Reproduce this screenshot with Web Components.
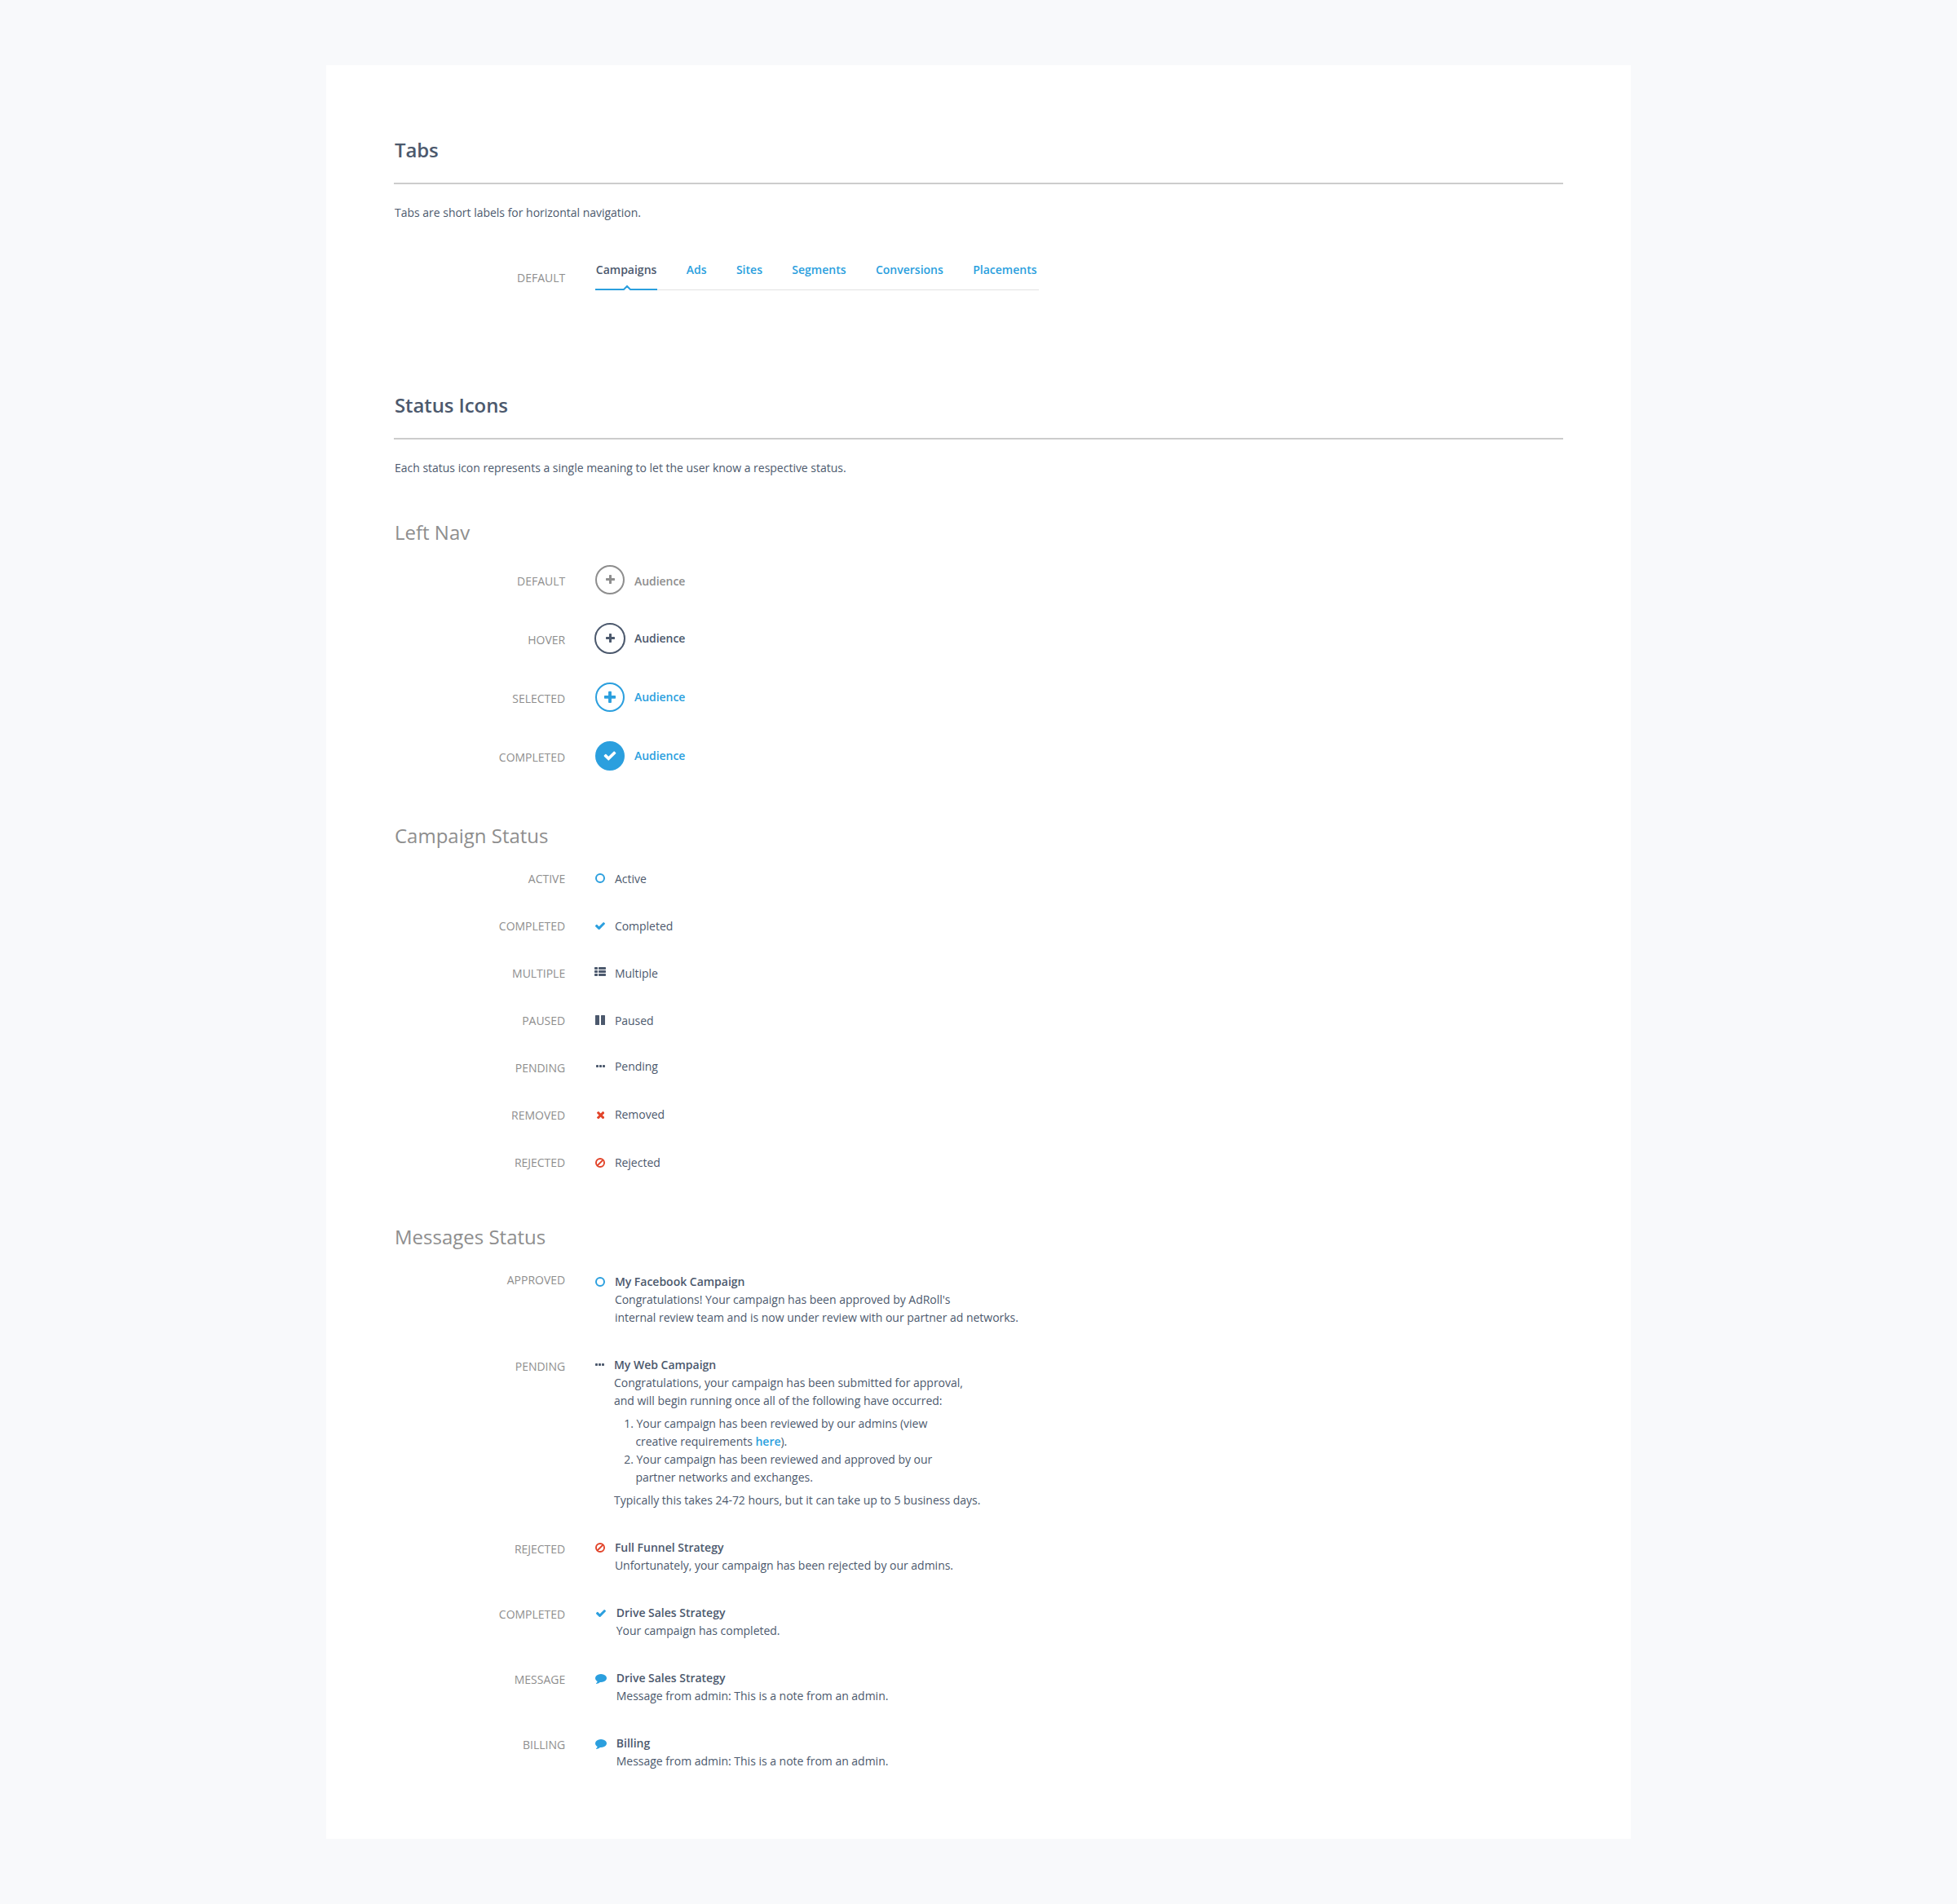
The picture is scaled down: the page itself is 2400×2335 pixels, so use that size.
<!DOCTYPE html>
<html lang="en">
<head>
<meta charset="utf-8">
<title>Tabs and Status Icons</title>
<style>
  html, body { margin: 0; }
  body {
    --ink: #4c596d; --muted: #8e8e8e; --blue: #2b9fde; --red: #e2442a;
    background: #f8f9fb; color: var(--ink);
    font: 14px/22px "Open Sans", sans-serif;
    letter-spacing: -.015px;
    min-height: 2335px; display: flex; justify-content: center; align-items: flex-start;
  }
</style>
</head>
<body>
<ui-sheet>
  <ui-section heading="Tabs" style="height:313px">
    <span slot="intro">Tabs are short labels for horizontal navigation.</span>
    <ui-row label="DEFAULT" style="--row-h:60px;--label-top:14px;margin-top:44px">
      <ui-tabs><ui-tab active>Campaigns</ui-tab><ui-tab>Ads</ui-tab><ui-tab>Sites</ui-tab><ui-tab>Segments</ui-tab><ui-tab>Conversions</ui-tab><ui-tab>Placements</ui-tab></ui-tabs>
    </ui-row>
  </ui-section>

  <ui-section heading="Status Icons">
    <span slot="intro">Each status icon represents a single meaning to let the user know a respective status.</span>

    <ui-group heading="Left Nav" style="margin-top:51px;height:372px">
      <ui-row label="DEFAULT" style="--row-h:72px"><ui-nav-item kind="default" style="--text-top:11px">Audience</ui-nav-item></ui-row>
      <ui-row label="HOVER" style="--row-h:72px"><ui-nav-item kind="hover">Audience</ui-nav-item></ui-row>
      <ui-row label="SELECTED" style="--row-h:72px"><ui-nav-item kind="selected">Audience</ui-nav-item></ui-row>
      <ui-row label="COMPLETED" style="--row-h:72px"><ui-nav-item kind="completed">Audience</ui-nav-item></ui-row>
    </ui-group>

    <ui-group heading="Campaign Status" style="height:492px;--head-gap:15px">
      <ui-row label="ACTIVE"><ui-status icon="ring" style="--icon-top:15px">Active</ui-status></ui-row>
      <ui-row label="COMPLETED"><ui-status icon="check" style="--icon-top:17px">Completed</ui-status></ui-row>
      <ui-row label="MULTIPLE"><ui-status icon="list" style="--icon-top:14px;--icon-left:-1px">Multiple</ui-status></ui-row>
      <ui-row label="PAUSED"><ui-status icon="pause" style="--icon-top:15px">Paused</ui-status></ui-row>
      <ui-row label="PENDING"><ui-status icon="dots" style="--icon-top:18px;--icon-left:1px;--text-top:9px">Pending</ui-status></ui-row>
      <ui-row label="REMOVED"><ui-status icon="times" style="--icon-top:17px;--icon-left:2px;--text-top:10px">Removed</ui-status></ui-row>
      <ui-row label="REJECTED"><ui-status icon="ban" style="--icon-top:16px">Rejected</ui-status></ui-row>
    </ui-group>

    <ui-group heading="Messages Status" style="--head-gap:15px">
      <ui-row label="APPROVED" style="--row-h:104px"><ui-status icon="ring" style="--icon-top:18px;--text-top:13px">
        <b>My Facebook Campaign</b><br>Congratulations! Your campaign has been approved by AdRoll's<br>internal review team and is now under review with our partner ad networks.
      </ui-status></ui-row>
      <ui-row label="PENDING" style="--row-h:224px;--label-top:13px"><ui-status icon="dots" style="--icon-top:20px;--text-top:11px;--text-left:23px">
        <b>My Web Campaign</b><br>Congratulations, your campaign has been submitted for approval,<br>and will begin running once all of the following have occurred:
        <ui-steps>
          <ui-step n="1.">Your campaign has been reviewed by our admins (view<br>creative requirements <ui-link>here</ui-link>).</ui-step>
          <ui-step n="2.">Your campaign has been reviewed and approved by our<br>partner networks and exchanges.</ui-step>
        </ui-steps>
        Typically this takes 24-72 hours, but it can take up to 5 business days.
      </ui-status></ui-row>
      <ui-row label="REJECTED" style="--row-h:80px;--label-top:13px"><ui-status icon="ban" style="--icon-top:16px;--text-top:11px">
        <b>Full Funnel Strategy</b><br>Unfortunately, your campaign has been rejected by our admins.
      </ui-status></ui-row>
      <ui-row label="COMPLETED" style="--row-h:80px;--label-top:13px"><ui-status icon="check" style="--icon-top:18px;--icon-left:1px;--text-top:11px;--text-left:25.800px">
        <b>Drive Sales Strategy</b><br>Your campaign has completed.
      </ui-status></ui-row>
      <ui-row label="MESSAGE" style="--row-h:80px;--label-top:13px"><ui-status icon="comment" style="--icon-top:17px;--text-top:11px;--text-left:25.800px">
        <b>Drive Sales Strategy</b><br>Message from admin: This is a note from an admin.
      </ui-status></ui-row>
      <ui-row label="BILLING" style="--row-h:80px;--label-top:13px"><ui-status icon="comment" style="--icon-top:17px;--text-top:11px;--text-left:25.800px">
        <b>Billing</b><br>Message from admin: This is a note from an admin.
      </ui-status></ui-row>
    </ui-group>
  </ui-section>
</ui-sheet>

<script>
const PLUS = '<path d="M1600 736v192q0 40-28 68t-68 28h-416v416q0 40-28 68t-68 28h-192q-40 0-68-28t-28-68v-416h-416q-40 0-68-28t-28-68v-192q0-40 28-68t68-28h416v-416q0-40 28-68t68-28h192q40 0 68 28t28 68v416h416q40 0 68 28t28 68z"/>';
const CHECK = '<path d="M1671 566q0 40-28 68l-724 724-136 136q-28 28-68 28t-68-28l-136-136-362-362q-28-28-28-68t28-68l136-136q28-28 68-28t68 28l294 295 656-657q28-28 68-28t68 28l136 136q28 28 28 68z"/>';
const TIMES = '<path d="M1490 1322q0 40-28 68l-136 136q-28 28-68 28t-68-28l-294-294-294 294q-28 28-68 28t-68-28l-136-136q-28-28-28-68t28-68l294-294-294-294q-28-28-28-68t28-68l136-136q28-28 68-28t68 28l294 294 294-294q28-28 68-28t68 28l136 136q28 28 28 68t-28 68l-294 294 294 294q28 28 28 68z"/>';
const COMMENT = '<path d="M1792 896q0 174-120 321.500t-326 233-450 85.500q-70 0-145-8-198 175-460 242-49 14-114 22-17 2-30.500-9t-17.500-29v-1q-3-4-.5-12t2-10 4.500-9.500l6-9 7-8.500 8-9q7-8 31-34.500t34.500-38 31-39.500 32.500-51 27-59 26-76q-157-89-247.500-220t-90.500-281q0-174 120-321.500t326-233 450-85.500 450 85.500 326 233 120 321.500z"/>';

/* name: [width, height, viewBox, colour, shapes] */
const ICONS = {
  ring: [12, 12, '0 0 12 12', 'blue', '<circle cx="6" cy="6" r="5" fill="none" stroke="currentColor" stroke-width="2"/>'],
  check: [12, 9.3, '121 334 1550 1188', 'blue', CHECK],
  list: [14, 11, '0 0 14 11', 'ink', [0, 4, 8].map(y => `<rect x="0" y="${y}" width="4" height="3" rx=".8"/><rect x="5" y="${y}" width="9" height="3" rx=".8"/>`).join('')],
  pause: [12, 12, '0 0 12 12', 'ink', '<rect width="5" height="12" rx=".5"/><rect x="7" width="5" height="12" rx=".5"/>'],
  dots: [11, 3, '0 0 11 3', 'ink', '<rect width="3" height="3" rx=".7"/><rect x="4" width="3" height="3" rx=".7"/><rect x="8" width="3" height="3" rx=".7"/>'],
  times: [9.3, 9.3, '302 366 1188 1188', 'red', TIMES],
  ban: [12, 12, '0 0 12 12', 'red', '<circle cx="6" cy="6" r="5.05" fill="none" stroke="currentColor" stroke-width="1.9"/><path d="M2.500 9.500 9.500 2.500" stroke="currentColor" stroke-width="1.800"/>'],
  comment: [14, 12, '0 256 1792 1536', 'blue', COMMENT]
};

const define = (name, render) => customElements.define(name, class extends HTMLElement {
  constructor() {
    super();
    this.attachShadow({ mode: 'open' });
  }
  connectedCallback() {
    this.shadowRoot.innerHTML = render(this);
  }
});

define('ui-sheet', () => `<style>
  :host { display: block; box-sizing: border-box; width: 1600px; height: 2175px; margin-top: 80px; padding: 87px 83px 0; background: #fff; }
</style><slot></slot>`);

define('ui-section', el => `<style>
  :host { display: block; }
  h1 { margin: 0; height: 57px; border-bottom: 2px solid #ccc; font-size: 24px; line-height: 33px; font-weight: 600; letter-spacing: -.1px; padding-left: 1px; }
  .intro { display: block; padding: 24px 0 0 1px; }
</style><h1>${el.getAttribute('heading')}</h1><div class="intro"><slot name="intro"></slot></div><slot></slot>`);

define('ui-group', el => `<style>
  :host { display: block; }
  h2 { margin: 0 0 var(--head-gap, 22px); font-size: 24px; line-height: 33px; font-weight: 400; letter-spacing: 0; color: var(--muted); padding-left: 1px; }
</style><h2>${el.getAttribute('heading')}</h2><slot></slot>`);

define('ui-row', el => `<style>
  :host { display: flex; align-items: flex-start; height: var(--row-h, 58px); }
  .label { width: 210.200px; margin-right: 36.800px; padding-top: var(--label-top, 11px); text-align: right; color: var(--muted); }
</style><div class="label">${el.getAttribute('label')}</div><slot></slot>`);

define('ui-tabs', () => `<style>
  :host { display: flex; gap: 36.400px; height: 35px; padding: 4px 2px 0 .8px; border-bottom: 1px solid #e2e2e2; letter-spacing: 0; }
</style><slot></slot>`);

define('ui-tab', el => `<style>
  :host { display: block; position: relative; font-weight: 600; color: var(--blue); }
  :host([active]) { color: var(--ink); }
  svg { position: absolute; left: -.8px; top: 26px; color: var(--blue); }
</style><slot></slot>${el.hasAttribute('active') ? '<svg width="76" height="10" viewBox="0 0 76 10" fill="none"><path d="M33 10 39 4 45 10z" fill="#fff"/><path d="M0 9H35L39 5 43 9H76" stroke="currentColor" stroke-width="2"/></svg>' : ''}`);

define('ui-nav-item', el => {
  const kind = el.getAttribute('kind');
  const size = kind === 'hover' ? 38 : 36;
  const c = size / 2;
  const glyph = (shape, px, dx, dy) => `<svg x="${c - px / 2 + dx}" y="${c - px / 2 + dy}" width="${px}" height="${px}" viewBox="0 0 1792 1792">${shape}</svg>`;
  const inner = { default: glyph(PLUS, 14, .5, 0), hover: glyph(PLUS, 14, .5, 0), selected: glyph(PLUS, 18, 0, .5), completed: glyph(CHECK, 17, 0, -.3) }[kind];
  return `<style>
  :host { display: flex; align-items: flex-start; font-weight: 600; letter-spacing: -.05px; color: var(--blue); }
  :host([kind=default]) { color: var(--muted); }
  :host([kind=hover]) { color: var(--ink); }
  svg { display: block; fill: currentColor; }
  .disc { margin: 2px 12px 0 0; }
  :host([kind=hover]) .disc { margin: 1px 11px 0 -1px; }
  :host([kind=completed]) .disc svg { fill: #fff; }
  .text { padding-top: var(--text-top, 9px); }
</style><svg class="disc" width="${size}" height="${size}"><circle cx="${c}" cy="${c}" r="${c - 1}" stroke="currentColor" stroke-width="2" ${kind === 'completed' ? '' : 'fill="none"'}/>${inner}</svg><div class="text"><slot></slot></div>`;
});

define('ui-status', el => {
  const [w, h, box, colour, shapes] = ICONS[el.getAttribute('icon')];
  return `<style>
  :host { display: flex; align-items: flex-start; }
  .icon { flex: none; width: var(--text-left, 23.900px); }
  svg { display: block; margin: var(--icon-top, 15px) 0 0 var(--icon-left, 0px); fill: currentColor; color: var(--${colour}); }
  .text { padding-top: var(--text-top, 11px); white-space: nowrap; }
  ::slotted(b) { font-weight: 600; }
</style><div class="icon"><svg width="${w}" height="${h}" viewBox="${box}">${shapes}</svg></div><div class="text"><slot></slot></div>`;
});

define('ui-steps', () => `<style>:host { display: block; margin: 6px 0; padding-left: 26.400px; letter-spacing: -.025px; }</style><slot></slot>`);
define('ui-step', el => `<style>:host { display: block; text-indent: -14.200px; }</style>${el.getAttribute('n')} <slot></slot>`);
define('ui-link', () => `<style>:host { color: var(--blue); font-weight: 600; }</style><slot></slot>`);
</script>
</body>
</html>
